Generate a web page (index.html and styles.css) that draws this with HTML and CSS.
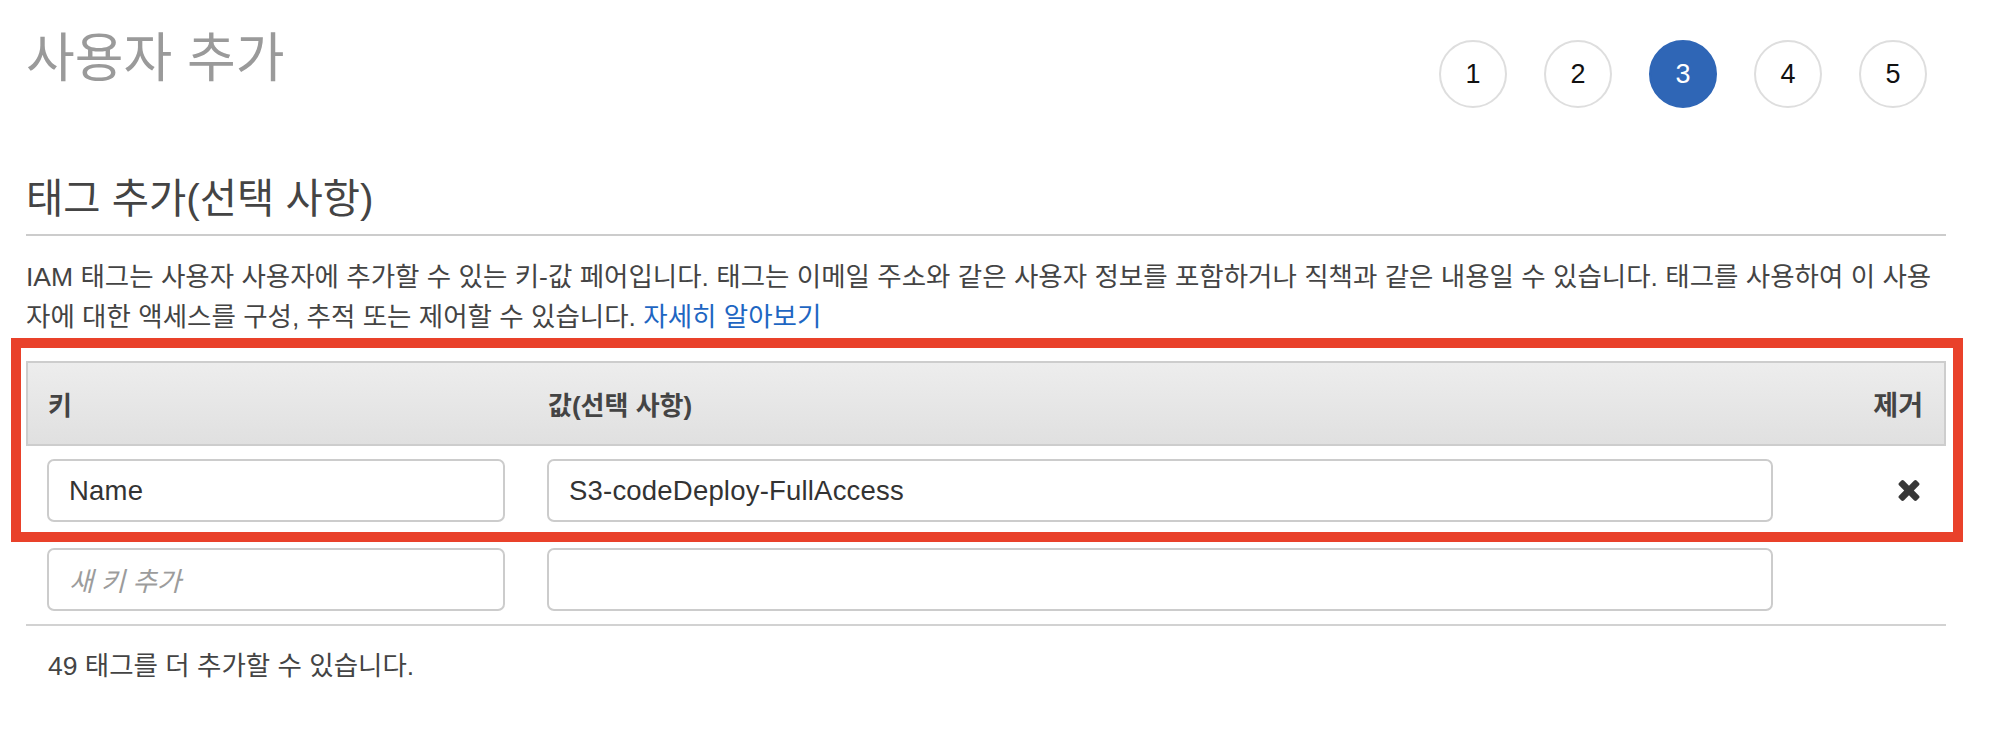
FILE: index.html
```html
<!DOCTYPE html>
<html lang="ko">
<head>
<meta charset="utf-8">
<title>사용자 추가</title>
<link rel="stylesheet" href="styles.css">
</head>
<body>
<div class="page">
  <div class="top">
    <h1 class="title">사용자 추가</h1>
    <ol class="steps">
      <li class="step">1</li>
      <li class="step">2</li>
      <li class="step active">3</li>
      <li class="step">4</li>
      <li class="step">5</li>
    </ol>
  </div>

  <h2 class="section-title">태그 추가(선택 사항)</h2>

  <p class="desc">IAM 태그는 사용자 사용자에 추가할 수 있는 키-값 페어입니다. 태그는 이메일 주소와 같은 사용자 정보를 포함하거나 직책과 같은 내용일 수 있습니다. 태그를 사용하여 이 사용<br>자에 대한 액세스를 구성, 추적 또는 제어할 수 있습니다. <a class="link" href="#">자세히 알아보기</a></p>

  <div class="tags">
    <div class="annot"></div>
    <div class="thead">
      <div class="th">키</div>
      <div class="th">값(선택 사항)</div>
      <div class="th th-rm">제거</div>
    </div>
    <div class="trow">
      <div class="field">Name</div>
      <div class="field">S3-codeDeploy-FullAccess</div>
      <div class="rm">
        <svg class="rm-icon" viewBox="110 366 1188 1188" width="22" height="21" aria-hidden="true"><path d="M1298 1322q0 40-28 68l-136 136q-28 28-68 28t-68-28l-294-294-294 294q-28 28-68 28t-68-28l-136-136q-28-28-28-68t28-68l294-294-294-294q-28-28-28-68t28-68l136-136q28-28 68-28t68 28l294 294 294-294q28-28 68-28t68 28l136 136q28 28 28 68t-28 68l-294 294 294 294q28 28 28 68z"/></svg>
      </div>
    </div>
    <div class="trow trow-last">
      <div class="field placeholder">새 키 추가</div>
      <div class="field"></div>
      <div class="rm"></div>
    </div>
  </div>

  <p class="count">49 태그를 더 추가할 수 있습니다.</p>
</div>
</body>
</html>
```

FILE: styles.css
```css
* { box-sizing: border-box; }

html, body {
  margin: 0;
  padding: 0;
  background: #ffffff;
}

body {
  font-family: "Liberation Sans", "Noto Sans CJK KR", sans-serif;
  color: #444444;
}

.page {
  padding: 29px 66px 0 26px;
}

.top {
  display: flex;
  justify-content: space-between;
  align-items: flex-start;
}

.title {
  margin: 0;
  font-size: 53px;
  line-height: 60px;
  font-weight: normal;
  color: #9a9a9a;
}

.steps {
  display: flex;
  gap: 37px;
  list-style: none;
  margin: 11px 19px 0 0;
  padding: 0;
}

.step {
  width: 68px;
  height: 68px;
  border: 2px solid #dedede;
  border-radius: 50%;
  display: flex;
  align-items: center;
  justify-content: center;
  font-size: 27px;
  color: #111111;
  background: #ffffff;
}

.step.active {
  background: #2f66b6;
  border-color: #2f66b6;
  color: #ffffff;
}

.section-title {
  margin: 71px 0 0;
  font-size: 40.5px;
  line-height: 40px;
  font-weight: normal;
  color: #444444;
  padding-bottom: 15px;
  border-bottom: 2px solid #cccccc;
}

.desc {
  margin: 21px 0 0;
  font-size: 26.5px;
  line-height: 40px;
  color: #444444;
  white-space: nowrap;
}

.link {
  color: #1e66c2;
  text-decoration: none;
}

.tags {
  position: relative;
  margin-top: 24px;
}

.annot {
  position: absolute;
  left: -15px;
  top: -23px;
  width: 1952px;
  height: 204px;
  border: 10px solid #e9412a;
  pointer-events: none;
  z-index: 2;
}

.thead,
.trow {
  display: grid;
  grid-template-columns: 458px 1226px 1fr;
  column-gap: 42px;
  align-items: center;
}

.thead {
  height: 85px;
  padding: 0 21px 0 20px;
  border: 2px solid #cdcdcd;
  background: linear-gradient(#ededed, #e0e0e0);
}

.th {
  font-size: 26px;
  font-weight: bold;
  color: #444444;
}

.th-rm {
  justify-self: end;
  font-size: 27px;
}

.trow {
  padding: 13px 23px 13px 21px;
}

.trow-last {
  border-bottom: 2px solid #d2d2d2;
}

.field {
  height: 63px;
  border: 2px solid #cccccc;
  border-radius: 7px;
  background: #ffffff;
  padding: 0 20px;
  display: flex;
  align-items: center;
  font-size: 27.5px;
  letter-spacing: 0.2px;
  color: #333333;
}

.placeholder {
  font-style: italic;
  color: #9c9c9c;
  font-size: 26.5px;
  letter-spacing: 0;
}

.rm {
  display: flex;
  justify-content: flex-end;
  padding-right: 3px;
}

.rm-icon {
  display: block;
  fill: #383838;
}

.count {
  margin: 20px 0 0;
  padding-left: 22px;
  font-size: 26.5px;
  line-height: 40px;
  color: #444444;
}
```
